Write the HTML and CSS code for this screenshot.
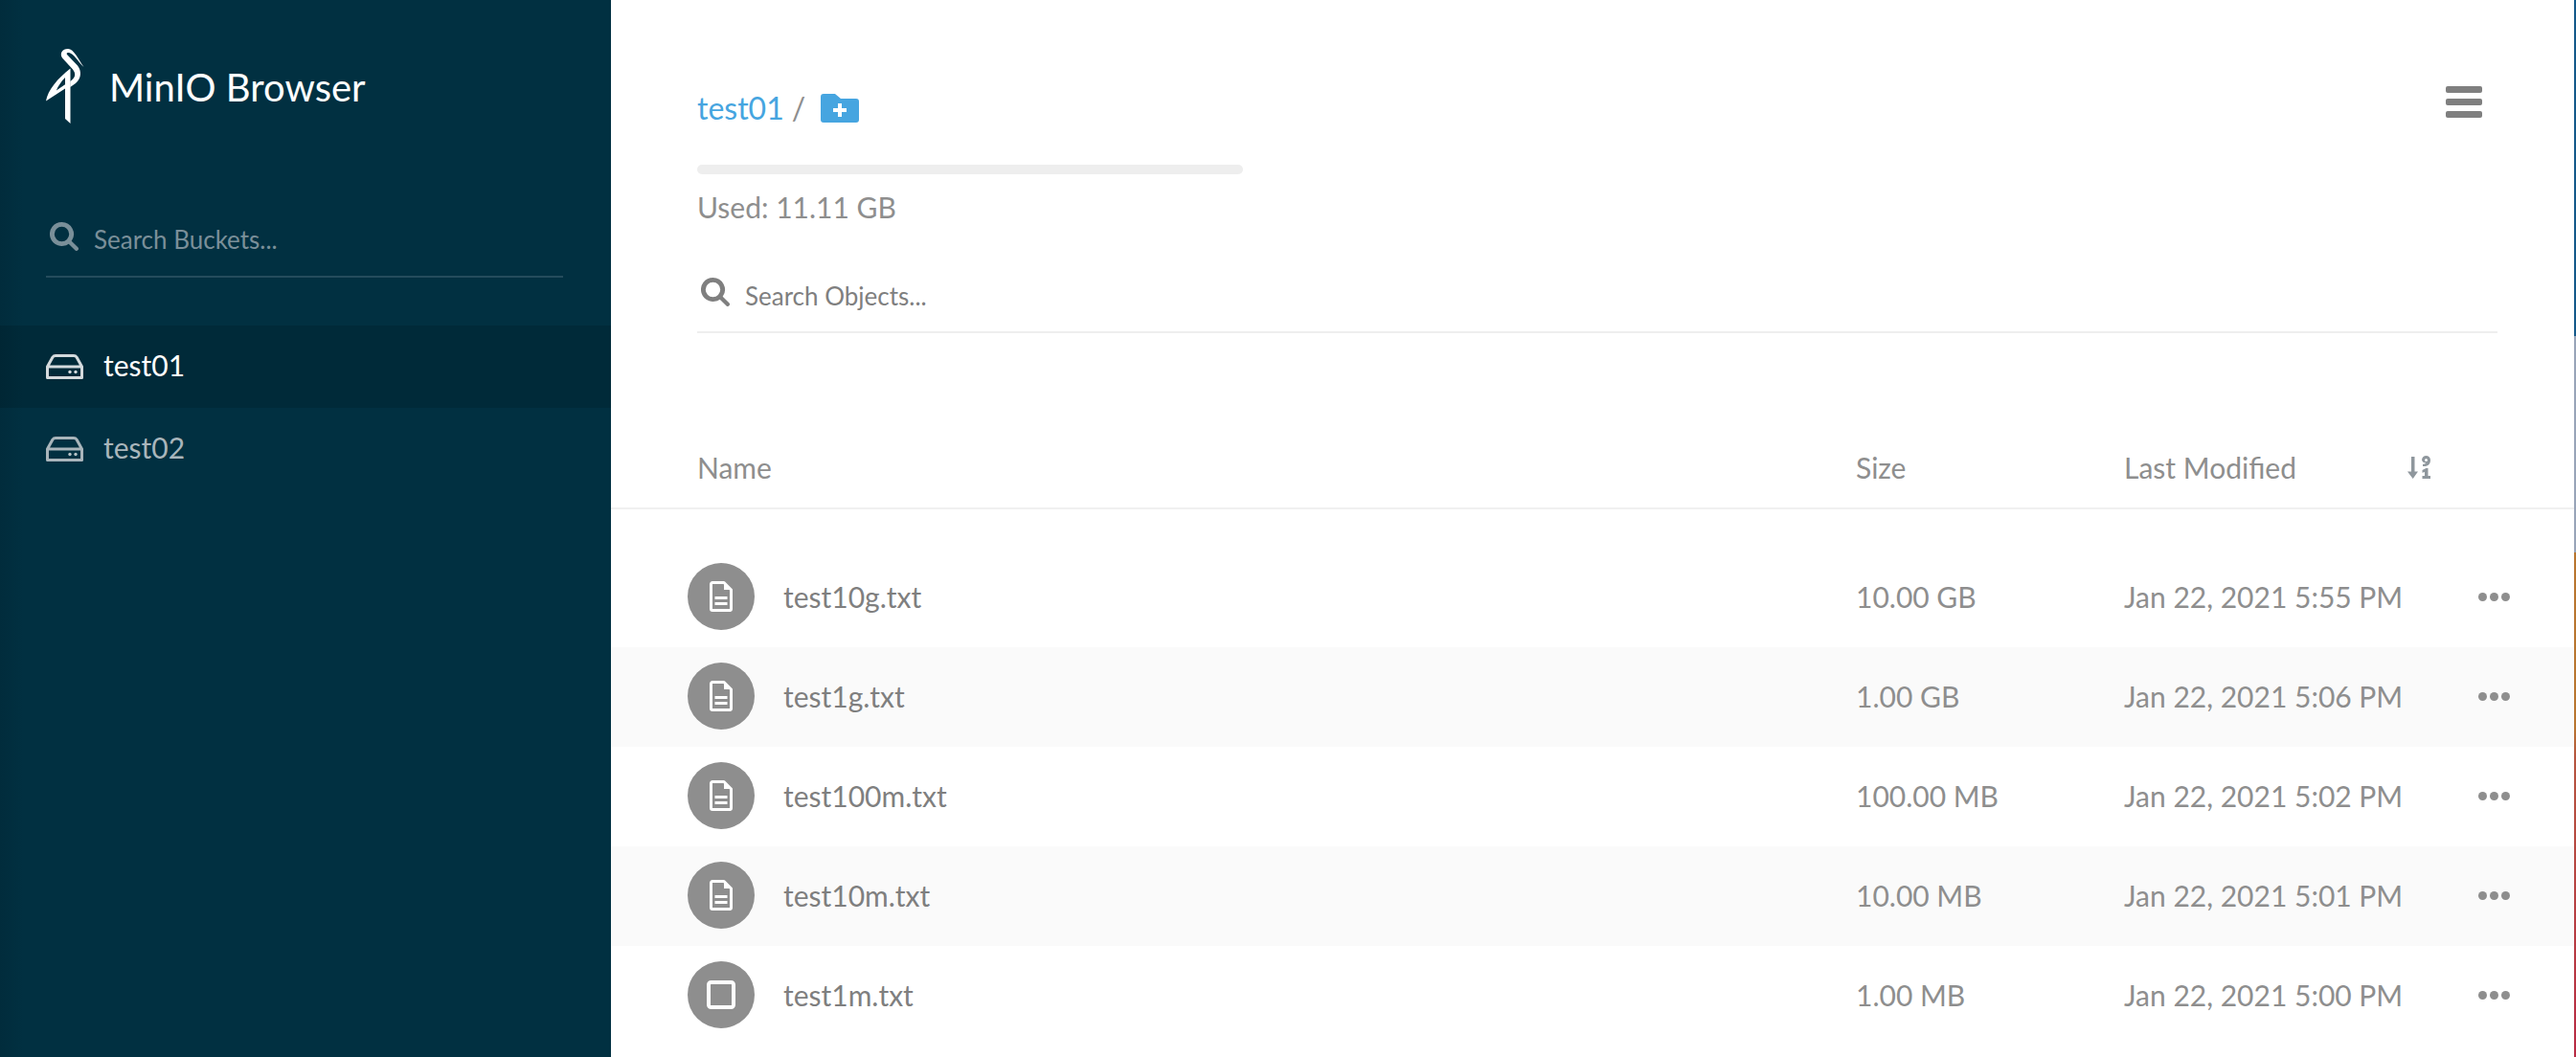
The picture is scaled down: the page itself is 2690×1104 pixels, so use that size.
FILE: index.html
```html
<!DOCTYPE html>
<html lang="en">
<head>
<meta charset="utf-8">
<title>MinIO Browser</title>
<link rel="stylesheet" href="styles.css">
</head>
<body>
<div class="app">
  <aside class="sidebar">
    <div class="brand">
      <svg class="logo" viewBox="0 0 41 80"><path fill="#fff" d="M39.500 20C34 12 29 1 23 1C17 1 14 6 17 10.500L28 22.500C31.500 27 31 31 25.300 35V41L31 37C37 32 37.500 24 33 18.500L22.500 7.500C21 6 21.500 4.500 24 5C29 6 34 15 39.500 20Z"/><path fill="#fff" fill-rule="evenodd" d="M25.500 21.500V79L20 74V42.500L0 55.500C2 44 12 32 25.500 21.500ZM20 31C16 35 13 39.500 10.800 44.500L20 38.300Z"/></svg>
      <span class="brand-name">MinIO Browser</span>
    </div>
    <div class="bucket-search">
      <svg class="search-icon" viewBox="0 0 30 30"><path fill-rule="evenodd" d="M12.500 0a12.500 12.500 0 0 1 10.200 19.700l6.600 6.600a2.100 2.100 0 0 1-3 3l-6.600-6.600A12.500 12.500 0 1 1 12.500 0zm0 4.800a7.700 7.700 0 1 0 0 15.400 7.700 7.700 0 0 0 0-15.400z"/></svg>
      <span class="bucket-placeholder">Search Buckets...</span>
    </div>
    <nav class="buckets">
      <div class="bucket active">
        <svg class="drive" viewBox="0 0 39 26"><path class="drive-line" d="M1.500 13L7 3Q8 1.500 10 1.500H29Q31 1.500 32 3L37.500 13V24.500H1.500ZM1.500 13H37.500"/><circle cx="25" cy="18.500" r="1.700"/><circle cx="31" cy="18.500" r="1.700"/></svg>
        <span class="bucket-name">test01</span>
      </div>
      <div class="bucket">
        <svg class="drive" viewBox="0 0 39 26"><path class="drive-line" d="M1.500 13L7 3Q8 1.500 10 1.500H29Q31 1.500 32 3L37.500 13V24.500H1.500ZM1.500 13H37.500"/><circle cx="25" cy="18.500" r="1.700"/><circle cx="31" cy="18.500" r="1.700"/></svg>
        <span class="bucket-name">test02</span>
      </div>
    </nav>
  </aside>
  <main class="content">
    <header class="top">
      <div class="path-row">
        <div class="crumbs">
          <span class="crumb">test01</span><span class="slash">/</span>
          <svg class="new-folder" viewBox="0 0 40 30"><path fill="#46a5e0" d="M3 0h12l6 5h16a3 3 0 0 1 3 3v19a3 3 0 0 1-3 3H3a3 3 0 0 1-3-3V3a3 3 0 0 1 3-3z"/><path fill="#fff" d="M18 10h4v5h5v4h-5v5h-4v-5h-5v-4h5z"/></svg>
        </div>
        <div class="menu"><i></i><i></i><i></i></div>
      </div>
      <div class="usage"></div>
      <div class="used">Used: 11.11 GB</div>
      <div class="object-search">
        <svg class="search-icon dark" viewBox="0 0 30 30"><path fill-rule="evenodd" d="M12.500 0a12.500 12.500 0 0 1 10.200 19.700l6.600 6.600a2.100 2.100 0 0 1-3 3l-6.600-6.600A12.500 12.500 0 1 1 12.500 0zm0 4.800a7.700 7.700 0 1 0 0 15.400 7.700 7.700 0 0 0 0-15.400z"/></svg>
        <span>Search Objects...</span>
      </div>
    </header>
    <div class="thead">
      <span class="c-name">Name</span>
      <span class="c-size">Size</span>
      <span class="c-date">Last Modified</span>
      <svg class="sort" viewBox="0 0 24 24"><path fill-rule="evenodd" d="M4 1h3.500v15.500H11L5.700 24 0 16.500h4zM19.500 0a4.500 4.500 0 0 1 4.500 4.500c0 3.500-2 6-5.500 6.500h-2.500V8.800c1.500 0 2.800-.3 3.500-1.300A4.300 4.300 0 0 1 15 4.500 4.500 4.500 0 0 1 19.500 0zm0 3a1.500 1.500 0 1 0 0 3 1.500 1.500 0 0 0 0-3zM15.500 15l4-2h2v8H24v3h-8.500v-3h2.500v-4l-2.500 .8z"/></svg>
    </div>
    <div class="rows">
      <div class="row">
        <span class="c-name"><span class="file-icon"><svg class="doc-icon" viewBox="0 0 24 32"><path class="doc" d="M3 1.500H15L22.500 9V29A1.500 1.500 0 0 1 21 30.500H3A1.500 1.500 0 0 1 1.500 29V3A1.500 1.500 0 0 1 3 1.500ZM5.500 17.500H18.500M5.500 23.500H18.500"/><path class="fold" d="M15 1.500V9H22.500Z"/></svg></span><span>test10g.txt</span></span>
        <span class="c-size">10.00 GB</span><span class="c-date">Jan 22, 2021 5:55 PM</span>
        <span class="dots"><i></i><i></i><i></i></span>
      </div>
      <div class="row">
        <span class="c-name"><span class="file-icon"><svg class="doc-icon" viewBox="0 0 24 32"><path class="doc" d="M3 1.500H15L22.500 9V29A1.500 1.500 0 0 1 21 30.500H3A1.500 1.500 0 0 1 1.500 29V3A1.500 1.500 0 0 1 3 1.500ZM5.500 17.500H18.500M5.500 23.500H18.500"/><path class="fold" d="M15 1.500V9H22.500Z"/></svg></span><span>test1g.txt</span></span>
        <span class="c-size">1.00 GB</span><span class="c-date">Jan 22, 2021 5:06 PM</span>
        <span class="dots"><i></i><i></i><i></i></span>
      </div>
      <div class="row">
        <span class="c-name"><span class="file-icon"><svg class="doc-icon" viewBox="0 0 24 32"><path class="doc" d="M3 1.500H15L22.500 9V29A1.500 1.500 0 0 1 21 30.500H3A1.500 1.500 0 0 1 1.500 29V3A1.500 1.500 0 0 1 3 1.500ZM5.500 17.500H18.500M5.500 23.500H18.500"/><path class="fold" d="M15 1.500V9H22.500Z"/></svg></span><span>test100m.txt</span></span>
        <span class="c-size">100.00 MB</span><span class="c-date">Jan 22, 2021 5:02 PM</span>
        <span class="dots"><i></i><i></i><i></i></span>
      </div>
      <div class="row">
        <span class="c-name"><span class="file-icon"><svg class="doc-icon" viewBox="0 0 24 32"><path class="doc" d="M3 1.500H15L22.500 9V29A1.500 1.500 0 0 1 21 30.500H3A1.500 1.500 0 0 1 1.500 29V3A1.500 1.500 0 0 1 3 1.500ZM5.500 17.500H18.500M5.500 23.500H18.500"/><path class="fold" d="M15 1.500V9H22.500Z"/></svg></span><span>test10m.txt</span></span>
        <span class="c-size">10.00 MB</span><span class="c-date">Jan 22, 2021 5:01 PM</span>
        <span class="dots"><i></i><i></i><i></i></span>
      </div>
      <div class="row">
        <span class="c-name"><span class="file-icon"><svg class="square-icon" viewBox="0 0 30 30"><rect class="square" x="2" y="2" width="26" height="26" rx="2.500"/></svg></span><span>test1m.txt</span></span>
        <span class="c-size">1.00 MB</span><span class="c-date">Jan 22, 2021 5:00 PM</span>
        <span class="dots"><i></i><i></i><i></i></span>
      </div>
    </div>
  </main>
  <div class="edge"></div>
</div>
</body>
</html>
```
FILE: styles.css
```css
* { box-sizing: border-box; }
html, body { margin: 0; height: 100%; overflow: hidden; }
body { font-family: Lato, "Liberation Sans", sans-serif; background: #fff; color: #8e8e8e; }
.app { display: flex; height: 1104px; }

.sidebar { width: 638px; flex: none; background: linear-gradient(90deg, #012c3c 0, #013041 24px); display: flex; flex-direction: column; }
.brand { display: flex; align-items: flex-start; padding: 50px 0 0 48px; height: 130px; }
.logo { width: 41px; height: 80px; flex: none; }
.brand-name { color: #fff; font-size: 40px; line-height: 48px; margin: 17px 0 0 25px; }
.bucket-search { display: flex; align-items: center; margin: 100px 50px 0 48px; height: 60px; padding-bottom: 18px; border-bottom: 2px solid #254c5c; }
.search-icon { width: 30px; height: 30px; flex: none; fill: #7a8f99; margin: -6px 0 0 4px; }
.search-icon.dark { fill: #7f7f7f; margin: -7px 0 0 4px; }
.bucket-placeholder { color: #7a8f99; font-size: 26px; margin-left: 16px; }
.buckets { margin-top: 50px; }
.bucket { display: flex; align-items: center; height: 86px; padding-left: 48px; color: #a9b5bb; font-size: 30px; }
.bucket.active { background: rgba(0, 0, 0, .12); color: #fff; }
.bucket-name { margin-top: -4px; }
.drive { width: 39px; height: 26px; flex: none; margin-right: 21px; fill: #b6c1c6; }
.active .drive { fill: #d4dadd; }
.drive-line { fill: none; stroke: #a9b5bb; stroke-width: 3; stroke-linejoin: round; }
.active .drive-line { stroke: #d4dadd; }

.content { flex: 1; min-width: 0; }
.top { padding: 0 80px 0 90px; }
.path-row { display: flex; justify-content: space-between; align-items: flex-start; padding-top: 88px; height: 172px; }
.crumbs { display: flex; align-items: center; height: 50px; }
.crumb { color: #46a5e0; font-size: 32px; margin-top: -2px; }
.slash { font-size: 32px; margin: -2px 0 0 8px; color: #8e8e8e; }
.new-folder { width: 40px; height: 30px; margin-left: 16px; }
.menu { display: flex; flex-direction: column; gap: 6px; margin: 2px 16px 0 0; }
.menu i { display: block; width: 38px; height: 7px; border-radius: 2px; background: #7f7f7f; }
.usage { width: 570px; height: 10px; border-radius: 5px; background: #eee; }
.used { font-size: 30px; line-height: 36px; margin-top: 16px; }
.object-search { display: flex; align-items: center; height: 77px; margin-top: 37px; border-bottom: 2px solid #eee; font-size: 26px; color: #7f7f7f; }
.object-search span { margin-left: 16px; }

.thead { display: flex; align-items: center; height: 184px; padding: 98px 0 0 90px; border-bottom: 2px solid #f0f0f0; font-size: 30px; }
.sort { width: 24px; height: 24px; flex: none; margin-left: 116px; fill: #8f979d; }
.c-name { width: 1210px; flex: none; display: flex; align-items: center; }
.c-size { width: 280px; flex: none; }
.c-date { flex: none; }
.rows { padding-top: 40px; }
.row { display: flex; align-items: center; height: 104px; padding: 0 67px 2px 80px; font-size: 30px; }
.row:nth-child(even) { background: #fafafa; }
.row .c-name { width: 1220px; color: #7f7f7f; }
.file-icon { width: 70px; height: 70px; border-radius: 50%; background: #8e8e8e; display: flex; align-items: center; justify-content: center; margin-right: 30px; flex: none; }
.doc-icon { width: 24px; height: 32px; }
.square-icon { width: 30px; height: 30px; }
.doc { fill: none; stroke: #fff; stroke-width: 3; stroke-linejoin: round; }
.fold { fill: #fff; }
.square { fill: none; stroke: #fff; stroke-width: 4; }
.dots { display: flex; gap: 3px; margin-left: auto; }
.dots i { width: 9px; height: 9px; border-radius: 50%; background: #8e8e8e; }

.edge { width: 2px; flex: none; background: linear-gradient(180deg, #14598a 0, #14598a 351px, #98a4b8 351px, #98a4b8 577px, #b8752f 577px, #b8752f 760px, #b5553f 790px, #b82a44 1104px); }
```
